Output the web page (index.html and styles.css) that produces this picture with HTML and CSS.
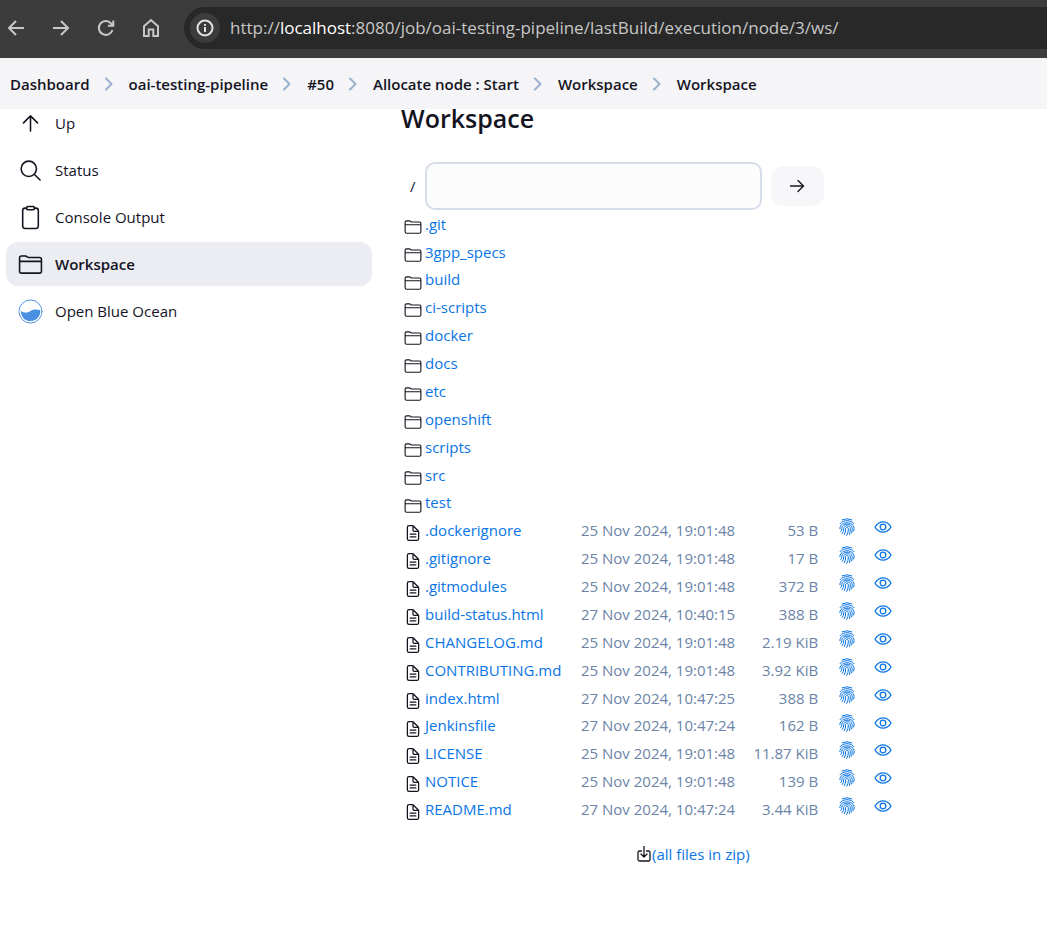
FILE: index.html
```html
<!DOCTYPE html>
<html lang="en">
<head>
<meta charset="utf-8">
<meta name="viewport" content="width=device-width, initial-scale=1">
<title>Workspace</title>
<link rel="stylesheet" href="styles.css">
</head>
<body>
<svg class="sprite" aria-hidden="true">
  <symbol id="folder" viewBox="0 0 512 512"><path d="M440 432H72a40 40 0 01-40-40V120a40 40 0 0140-40h75.890a40 40 0 0122.190 6.720l27.840 18.560a40 40 0 0022.190 6.720H440a40 40 0 0140 40v240a40 40 0 01-40 40zM32 192h448"/></symbol>
  <symbol id="file" viewBox="0 0 512 512"><path d="M416 221.250V416a48 48 0 01-48 48H144a48 48 0 01-48-48V96a48 48 0 0148-48h98.750a32 32 0 0122.620 9.370l141.260 141.260a32 32 0 019.370 22.620zM256 56v120a32 32 0 0032 32h120M176 288h160M176 368h160"/></symbol>
  <symbol id="print" viewBox="0 0 16 18"><path d="M3.200 1.800Q8-.4 12.800 1.800M1 5.700C4 1.600 12 1.600 15 5.700M.9 10.600C.5 2.800 15.300 2.800 15.100 10.600Q15.100 12 14.600 13M1.800 13.600Q3 12.300 2.800 10.500C2.800 4.700 13.200 4.700 13.200 10.500Q13.200 13 12.600 15M3.200 15.500Q5 13.500 4.700 10.700C4.800 6.800 11.300 6.800 11.300 10.700Q11.300 14 10.400 16.600M5.300 16.700Q7 14 6.500 11C6.500 9 9.400 9 9.400 11Q9.400 14.500 7.800 17.300"/></symbol>
  <symbol id="eye" viewBox="0 0 512 512"><path d="M255.660 112c-77.940 0-157.890 45.110-220.830 135.330a16 16 0 00-.27 17.770C82.920 340.800 161.800 400 255.660 400c92.840 0 173.340-59.380 221.790-135.250a16.140 16.140 0 000-17.470C428.890 172.280 347.800 112 255.660 112z"/><circle cx="256" cy="256" r="80"/></symbol>
  <symbol id="chevron" viewBox="0 0 10 14"><path d="M2 1.500 7.500 7 2 12.500"/></symbol>
</svg>

<div class="browser-bar">
  <button class="nav" aria-label="Back"><svg viewBox="0 0 20 20"><path d="M18 10H3M10 3l-7 7 7 7"/></svg></button>
  <button class="nav" aria-label="Forward"><svg viewBox="0 0 20 20"><path d="M2 10h15M10 3l7 7-7 7"/></svg></button>
  <button class="nav" aria-label="Reload"><svg viewBox="0 0 20 20"><path d="M16.500 12A7 7 0 1 1 15.500 5.800L17 7.500M17.300 2.500v5.300H12"/></svg></button>
  <button class="nav" aria-label="Home"><svg viewBox="0 0 20 20"><path d="M3 18V8.300L10 2l7 6.300V18h-4.700v-6.500H7.700V18z"/></svg></button>
  <div class="address">
    <button class="info" aria-label="Site information"><svg viewBox="0 0 20 20"><circle cx="10" cy="10" r="7.500"/><path d="M10 9v5M10 6v1.800"/></svg></button>
    <span class="url">http://<b>localhost</b>:8080/job/oai-testing-pipeline/lastBuild/execution/node/3/ws/</span>
  </div>
</div>

<nav class="crumbs" aria-label="Breadcrumb">
  <a href="#">Dashboard</a><svg><use href="#chevron"/></svg>
  <a href="#">oai-testing-pipeline</a><svg><use href="#chevron"/></svg>
  <a href="#">#50</a><svg><use href="#chevron"/></svg>
  <a href="#">Allocate node : Start</a><svg><use href="#chevron"/></svg>
  <a href="#">Workspace</a><svg><use href="#chevron"/></svg>
  <a href="#">Workspace</a>
</nav>

<div class="page">
  <nav class="tasks" aria-label="Tasks">
    <a class="task" href="#"><svg viewBox="0 0 512 512"><path d="M112 244l144-144 144 144M256 120v292"/></svg>Up</a>
    <a class="task" href="#"><svg viewBox="0 0 512 512"><path d="M221 64a157 157 0 10157 157A157 157 0 00221 64zM338 338l114 114"/></svg>Status</a>
    <a class="task" href="#"><svg viewBox="0 0 512 512"><path d="M336 64h32a48 48 0 0148 48v320a48 48 0 01-48 48H144a48 48 0 01-48-48V112a48 48 0 0148-48h32"/><rect x="176" y="32" width="160" height="64" rx="26"/></svg>Console Output</a>
    <a class="task active" href="#" aria-current="page"><svg><use href="#folder"/></svg>Workspace</a>
    <a class="task" href="#"><svg class="ocean" viewBox="0 0 26 26"><circle cx="13" cy="13" r="12"/><path d="M3 12.500C7 14.800 9.500 14.500 13 12.500S19.500 10.500 23 11.500C24 18 19 23 13 23S3 18.500 3 12.500z"/></svg>Open Blue Ocean</a>
  </nav>

  <main class="main">
    <h1>Workspace</h1>
    <form class="path">
      <label for="path">/</label>
      <input id="path" type="text">
      <button type="button" aria-label="Go"><svg viewBox="0 0 16 16"><path d="M1.500 8h13M9 2.500 14.500 8 9 13.500"/></svg></button>
    </form>
    <table class="files">
      <tr><td><svg class="folder"><use href="#folder"/></svg></td><td><a href="#">.git</a></td></tr>
      <tr><td><svg class="folder"><use href="#folder"/></svg></td><td><a href="#">3gpp_specs</a></td></tr>
      <tr><td><svg class="folder"><use href="#folder"/></svg></td><td><a href="#">build</a></td></tr>
      <tr><td><svg class="folder"><use href="#folder"/></svg></td><td><a href="#">ci-scripts</a></td></tr>
      <tr><td><svg class="folder"><use href="#folder"/></svg></td><td><a href="#">docker</a></td></tr>
      <tr><td><svg class="folder"><use href="#folder"/></svg></td><td><a href="#">docs</a></td></tr>
      <tr><td><svg class="folder"><use href="#folder"/></svg></td><td><a href="#">etc</a></td></tr>
      <tr><td><svg class="folder"><use href="#folder"/></svg></td><td><a href="#">openshift</a></td></tr>
      <tr><td><svg class="folder"><use href="#folder"/></svg></td><td><a href="#">scripts</a></td></tr>
      <tr><td><svg class="folder"><use href="#folder"/></svg></td><td><a href="#">src</a></td></tr>
      <tr><td><svg class="folder"><use href="#folder"/></svg></td><td><a href="#">test</a></td></tr>
      <tr><td><svg class="file"><use href="#file"/></svg></td><td><a href="#">.dockerignore</a></td><td>25 Nov 2024, 19:01:48</td><td>53 B</td><td><a href="#" aria-label="Fingerprint"><svg class="print"><use href="#print"/></svg></a></td><td><a href="#" aria-label="View"><svg class="eye"><use href="#eye"/></svg></a></td></tr>
      <tr><td><svg class="file"><use href="#file"/></svg></td><td><a href="#">.gitignore</a></td><td>25 Nov 2024, 19:01:48</td><td>17 B</td><td><a href="#" aria-label="Fingerprint"><svg class="print"><use href="#print"/></svg></a></td><td><a href="#" aria-label="View"><svg class="eye"><use href="#eye"/></svg></a></td></tr>
      <tr><td><svg class="file"><use href="#file"/></svg></td><td><a href="#">.gitmodules</a></td><td>25 Nov 2024, 19:01:48</td><td>372 B</td><td><a href="#" aria-label="Fingerprint"><svg class="print"><use href="#print"/></svg></a></td><td><a href="#" aria-label="View"><svg class="eye"><use href="#eye"/></svg></a></td></tr>
      <tr><td><svg class="file"><use href="#file"/></svg></td><td><a href="#">build-status.html</a></td><td>27 Nov 2024, 10:40:15</td><td>388 B</td><td><a href="#" aria-label="Fingerprint"><svg class="print"><use href="#print"/></svg></a></td><td><a href="#" aria-label="View"><svg class="eye"><use href="#eye"/></svg></a></td></tr>
      <tr><td><svg class="file"><use href="#file"/></svg></td><td><a href="#">CHANGELOG.md</a></td><td>25 Nov 2024, 19:01:48</td><td>2.19 KiB</td><td><a href="#" aria-label="Fingerprint"><svg class="print"><use href="#print"/></svg></a></td><td><a href="#" aria-label="View"><svg class="eye"><use href="#eye"/></svg></a></td></tr>
      <tr><td><svg class="file"><use href="#file"/></svg></td><td><a href="#">CONTRIBUTING.md</a></td><td>25 Nov 2024, 19:01:48</td><td>3.92 KiB</td><td><a href="#" aria-label="Fingerprint"><svg class="print"><use href="#print"/></svg></a></td><td><a href="#" aria-label="View"><svg class="eye"><use href="#eye"/></svg></a></td></tr>
      <tr><td><svg class="file"><use href="#file"/></svg></td><td><a href="#">index.html</a></td><td>27 Nov 2024, 10:47:25</td><td>388 B</td><td><a href="#" aria-label="Fingerprint"><svg class="print"><use href="#print"/></svg></a></td><td><a href="#" aria-label="View"><svg class="eye"><use href="#eye"/></svg></a></td></tr>
      <tr><td><svg class="file"><use href="#file"/></svg></td><td><a href="#">Jenkinsfile</a></td><td>27 Nov 2024, 10:47:24</td><td>162 B</td><td><a href="#" aria-label="Fingerprint"><svg class="print"><use href="#print"/></svg></a></td><td><a href="#" aria-label="View"><svg class="eye"><use href="#eye"/></svg></a></td></tr>
      <tr><td><svg class="file"><use href="#file"/></svg></td><td><a href="#">LICENSE</a></td><td>25 Nov 2024, 19:01:48</td><td>11.87 KiB</td><td><a href="#" aria-label="Fingerprint"><svg class="print"><use href="#print"/></svg></a></td><td><a href="#" aria-label="View"><svg class="eye"><use href="#eye"/></svg></a></td></tr>
      <tr><td><svg class="file"><use href="#file"/></svg></td><td><a href="#">NOTICE</a></td><td>25 Nov 2024, 19:01:48</td><td>139 B</td><td><a href="#" aria-label="Fingerprint"><svg class="print"><use href="#print"/></svg></a></td><td><a href="#" aria-label="View"><svg class="eye"><use href="#eye"/></svg></a></td></tr>
      <tr><td><svg class="file"><use href="#file"/></svg></td><td><a href="#">README.md</a></td><td>27 Nov 2024, 10:47:24</td><td>3.44 KiB</td><td><a href="#" aria-label="Fingerprint"><svg class="print"><use href="#print"/></svg></a></td><td><a href="#" aria-label="View"><svg class="eye"><use href="#eye"/></svg></a></td></tr>
    </table>
    <a class="zip" href="#"><svg viewBox="0 0 16 16"><path d="M5.500 5H3.500A1.500 1.500 0 0 0 2 6.500v7A1.500 1.500 0 0 0 3.500 15h9a1.500 1.500 0 0 0 1.500-1.500v-7A1.500 1.500 0 0 0 12.500 5h-2M8 .5v10.500M5 8l3 3 3-3"/></svg>(all files in zip)</a>
  </main>
</div>
</body>
</html>
```
FILE: styles.css
```css
* { box-sizing: border-box; }

body {
  margin: 0;
  background: #fff;
  color: #14141f;
  font: 15px/28px "Open Sans", "Noto Sans", sans-serif;
}

a { color: #0a75e6; text-decoration: none; }
button { padding: 0; border: 0; background: none; color: inherit; }
svg { display: block; flex: none; fill: none; stroke: currentColor; stroke-linecap: round; stroke-linejoin: round; }
.sprite { position: absolute; width: 0; height: 0; }

.browser-bar {
  display: flex;
  align-items: center;
  height: 58px;
  padding: 0 0 2px 6px;
  background: #3c3c3c;
  color: #c7c7c7;
}
.nav { width: 20px; margin-right: 25px; }
.nav svg { width: 20px; height: 20px; stroke-width: 2; stroke-linecap: butt; stroke-linejoin: miter; }
.address {
  display: flex;
  flex: 1;
  align-items: center;
  gap: 10px;
  min-width: 0;
  height: 42px;
  margin-left: -2px;
  padding-left: 6px;
  border-radius: 21px 0 0 21px;
  background: #282828;
}
.info { display: grid; place-items: center; flex: none; width: 30px; height: 30px; border-radius: 50%; background: #3c3c3c; color: #e3e3e3; }
.info svg { width: 20px; height: 20px; stroke-width: 2; stroke-linecap: butt; }
.url { overflow: hidden; font-size: 17px; white-space: nowrap; }
.url b { color: #fff; font-weight: 400; }

.crumbs {
  display: flex;
  align-items: center;
  height: 51px;
  padding: 0 10px;
  background: #f5f5f8;
  font-size: 15px;
  font-weight: 600;
  white-space: nowrap;
}
.crumbs a { color: #14141f; }
.crumbs svg { width: 10px; height: 14px; margin: 0 15px 0 14px; color: #9ab0cb; stroke-width: 2; }

.page { display: flex; gap: 29px; padding-left: 6px; }
.tasks { flex: none; width: 366px; }
.task {
  display: flex;
  align-items: center;
  gap: 12px;
  height: 44px;
  margin-bottom: 3px;
  padding-left: 12px;
  border-radius: 12px;
  color: #14141f;
}
.task svg { width: 25px; height: 25px; stroke-width: 32; }
.task:first-child { height: 36px; padding-bottom: 8px; }
.task.active { background: #ecedf3; font-weight: 600; }
.task .ocean { color: #4a90e2; stroke-width: 1; }
.ocean path { fill: currentColor; stroke: none; }

.main { flex: 1; min-width: 0; }
h1 { margin: 0 0 35px; font-size: 25px; line-height: 18px; font-weight: 600; }
.path { display: flex; align-items: center; gap: 9px; padding-left: 9px; }
.path input {
  width: 337px;
  height: 48px;
  padding: 0 12px;
  border: 2px solid #d6dde9;
  border-radius: 10px;
  background: #fcfcfd;
  font: inherit;
}
.path button { display: grid; place-items: center; width: 53px; height: 40px; border-radius: 12px; background: #f7f7f9; }
.path svg { width: 16px; height: 16px; stroke-width: 1.3; }

.files { border-collapse: collapse; white-space: nowrap; }
.files tr { height: 28px; }
.files tr:nth-child(8n + 3) { height: 27px; line-height: 27px; }
.files td { padding: 0; color: #6b84a8; vertical-align: top; }
.files td:nth-child(1) { width: 24px; padding: 8px 0 0 3px; color: #14141f; }
.files td:nth-child(2) { width: 156px; }
.files td:nth-child(3) { width: 154px; }
.files td:nth-child(4) { width: 83px; text-align: right; }
.files td:nth-child(5) { width: 56px; padding: 2px 0 0 21px; }
.files td:nth-child(6) { width: 18px; padding-top: 2px; }
.files svg { height: 18px; stroke-width: 32; }
.files .folder { width: 18px; }
.files .file { width: 18px; stroke-width: 36; }
.files .print { width: 16px; stroke-width: 1; }
.files .eye { width: 18px; stroke-width: 36; }

.zip { display: flex; align-items: center; width: fit-content; margin: 17px 0 0 235px; }
.zip svg { width: 16px; height: 16px; color: #14141f; stroke-width: 1.3; }
```
